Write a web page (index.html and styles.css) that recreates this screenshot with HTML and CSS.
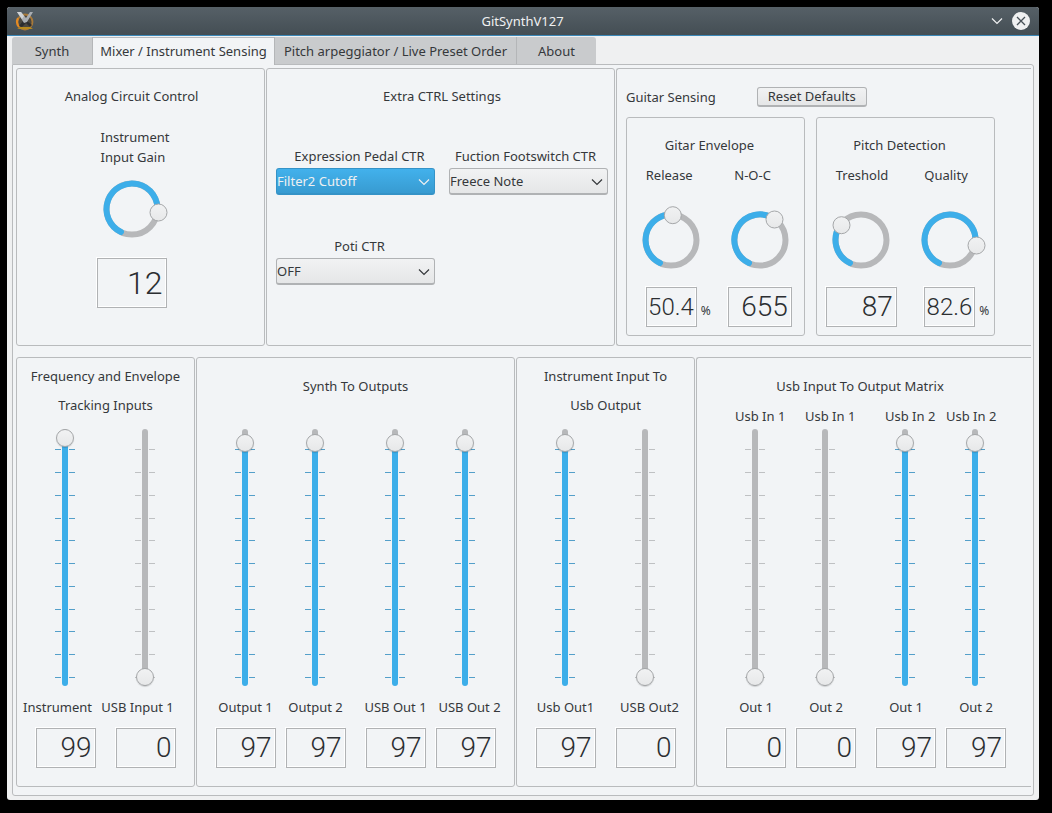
FILE: index.html
```html
<!DOCTYPE html>
<html lang="en">
<head>
<meta charset="utf-8">
<title>GitSynthV127</title>
<link rel="stylesheet" href="styles.css">
</head>
<body>
<svg class="defs" aria-hidden="true">
  <symbol id="ticks" viewBox="0 0 20 257">
    <path stroke="currentColor" fill="none" d="M0 20.5h6m8 0h6M0 43.5h6m8 0h6M0 66.5h6m8 0h6M0 89.5h6m8 0h6M0 111.5h6m8 0h6M0 134.5h6m8 0h6M0 157.5h6m8 0h6M0 180.5h6m8 0h6M0 202.5h6m8 0h6M0 225.5h6m8 0h6M0 248.5h6m8 0h6"/>
  </symbol>
  <symbol id="chevron" viewBox="0 0 12 12"><path d="M1 3.500l5 5 5-5" fill="none" stroke="currentColor" stroke-width="1.200"/></symbol>
  <linearGradient id="knob" x1="0" y1="0" x2="0" y2="1"><stop offset="0" stop-color="#f1f2f3"/><stop offset="1" stop-color="#e7e8e9"/></linearGradient>
</svg>
<div class="window">
  <header class="titlebar">
    <svg class="app-icon" viewBox="0 0 20 20" aria-hidden="true">
      <circle cx="10" cy="11" r="7.500" fill="#4b4740" stroke="#a97a3a" stroke-width="1.800"/>
      <path d="M3 7a8 8 0 0 0 1 9" fill="none" stroke="#e58a22" stroke-width="2"/>
      <path d="M2 18l4-2h9l3 2z" fill="#b98a1c"/>
      <path d="M8 10l-4 5 3 1 4-4 4 4 2-2-5-4z" fill="#2c2d2f"/>
      <path d="M2 1h4l5 6 4-6h3l-6 10-3 1z" fill="#a9adb2"/>
      <path d="M2 1h4l3 4-2 3z" fill="#d0d3d6"/>
    </svg>
    <h1 class="titlebar__name">GitSynthV127</h1>
    <div class="titlebar__buttons">
      <button class="wbtn" aria-label="Minimize"><svg viewBox="0 0 12 12" width="12" height="12"><use href="#chevron"/></svg></button>
      <button class="wbtn wbtn--close" aria-label="Close"><svg viewBox="0 0 18 18" width="18" height="18"><path d="M5 5l8 8M13 5l-8 8" stroke="#475057" stroke-width="1.300"/></svg></button>
    </div>
  </header>

  <main class="body">
    <nav class="tabs" role="tablist">
      <button class="tab tab--synth" role="tab">Synth</button>
      <button class="tab tab--mixer tab--active" role="tab" aria-selected="true">Mixer / Instrument Sensing</button>
      <button class="tab tab--pitch" role="tab">Pitch arpeggiator / Live Preset Order</button>
      <button class="tab tab--about" role="tab">About</button>
    </nav>

    <div class="pane">
      <div class="row row--top">
        <section class="panel panel--analog">
          <h2 class="title">Analog Circuit Control</h2>
          <div class="gain">
            <p class="gain__label">Instrument<br>Input Gain</p>
            <svg class="dial" viewBox="0 0 58 58" role="slider" tabindex="0" aria-label="Instrument Input Gain" aria-valuenow="12">
              <circle class="dial__ring" cx="29" cy="29" r="25.500"/><path class="dial__arc" d="M18 52A25.500 25.500 0 1 1 54.300 32.300"/><circle class="dial__knob" cx="55.500" cy="32.500" r="8.500"/>
            </svg>
            <output class="lcd lcd--gain">12</output>
          </div>
        </section>

        <section class="panel panel--ctrl">
          <h2 class="title">Extra CTRL Settings</h2>
          <div class="fields">
            <div class="field">
              <label for="pedal">Expression Pedal CTR</label>
              <div class="combo combo--focus"><select id="pedal"><option>Filter2 Cutoff</option></select><svg class="combo__arrow"><use href="#chevron"/></svg></div>
            </div>
            <div class="field field--foot">
              <label for="foot">Fuction Footswitch CTR</label>
              <div class="combo"><select id="foot"><option>Freece Note</option></select><svg class="combo__arrow"><use href="#chevron"/></svg></div>
            </div>
            <div class="field">
              <label for="poti">Poti CTR</label>
              <div class="combo"><select id="poti"><option>OFF</option></select><svg class="combo__arrow"><use href="#chevron"/></svg></div>
            </div>
          </div>
        </section>

        <section class="panel panel--open panel--sensing">
          <div class="sensing__head">
            <h2 class="title">Guitar Sensing</h2>
            <button class="push">Reset Defaults</button>
          </div>
          <div class="sensing__groups">
            <section class="panel group">
              <h3 class="title">Gitar Envelope</h3>
              <div class="group__cols">
                <div class="control">
                  <p class="control__label">Release</p>
                  <svg class="dial" viewBox="0 0 58 58" role="slider" tabindex="0" aria-label="Release" aria-valuenow="50.4">
                    <circle class="dial__ring" cx="29" cy="29" r="25.500"/><path class="dial__arc" d="M18 52A25.500 25.500 0 0 1 30.800 3.600"/><circle class="dial__knob" cx="30.800" cy="4.200" r="8.500"/>
                  </svg>
                  <div class="reading"><output class="lcd lcd--pct">50.4</output><span class="unit">%</span></div>
                </div>
                <div class="control">
                  <p class="control__label">N-O-C</p>
                  <svg class="dial" viewBox="0 0 58 58" role="slider" tabindex="0" aria-label="N-O-C" aria-valuenow="655">
                    <circle class="dial__ring" cx="29" cy="29" r="25.500"/><path class="dial__arc" d="M18 52A25.500 25.500 0 1 1 43.700 8.200"/><circle class="dial__knob" cx="43.500" cy="8.500" r="8.500"/>
                  </svg>
                  <div class="reading"><output class="lcd lcd--noc">655</output></div>
                </div>
              </div>
            </section>
            <section class="panel group">
              <h3 class="title">Pitch Detection</h3>
              <div class="group__cols">
                <div class="control">
                  <p class="control__label">Treshold</p>
                  <svg class="dial" viewBox="0 0 58 58" role="slider" tabindex="0" aria-label="Treshold" aria-valuenow="87">
                    <circle class="dial__ring" cx="29" cy="29" r="25.500"/><path class="dial__arc" d="M18 52A25.500 25.500 0 0 1 8.700 13.600"/><circle class="dial__knob" cx="9.500" cy="14.200" r="8.500"/>
                  </svg>
                  <div class="reading"><output class="lcd lcd--treshold">87</output></div>
                </div>
                <div class="control">
                  <p class="control__label">Quality</p>
                  <svg class="dial" viewBox="0 0 58 58" role="slider" tabindex="0" aria-label="Quality" aria-valuenow="82.6">
                    <circle class="dial__ring" cx="29" cy="29" r="25.500"/><path class="dial__arc" d="M18 52A25.500 25.500 0 1 1 54 34.200"/><circle class="dial__knob" cx="55.500" cy="34.500" r="8.500"/>
                  </svg>
                  <div class="reading"><output class="lcd lcd--pct">82.6</output><span class="unit">%</span></div>
                </div>
              </div>
            </section>
          </div>
        </section>
      </div>

      <div class="row row--bottom">
        <section class="panel mixer mixer--tracking">
          <div class="mixer__head mixer__head--two"><h2 class="title">Frequency and Envelope</h2><h2 class="title">Tracking Inputs</h2></div>
          <div class="bank">
            <div class="strip">
              <div class="fader" style="--v:99"><span class="fader__track"></span><svg class="fader__ticks"><use href="#ticks"/></svg><input id="s1" type="range" max="99" value="99"></div>
              <label for="s1">Instrument</label><output class="lcd" for="s1">99</output>
            </div>
            <div class="strip">
              <div class="fader fader--off" style="--v:0"><span class="fader__track"></span><svg class="fader__ticks"><use href="#ticks"/></svg><input id="s2" type="range" max="99" value="0"></div>
              <label for="s2">USB Input 1</label><output class="lcd" for="s2">0</output>
            </div>
          </div>
        </section>

        <section class="panel mixer">
          <div class="mixer__head"><h2 class="title">Synth To Outputs</h2></div>
          <div class="bank">
            <div class="pair">
              <div class="strip">
                <div class="fader" style="--v:97"><span class="fader__track"></span><svg class="fader__ticks"><use href="#ticks"/></svg><input id="s3" type="range" max="99" value="97"></div>
                <label for="s3">Output 1</label><output class="lcd" for="s3">97</output>
              </div>
              <div class="strip">
                <div class="fader" style="--v:97"><span class="fader__track"></span><svg class="fader__ticks"><use href="#ticks"/></svg><input id="s4" type="range" max="99" value="97"></div>
                <label for="s4">Output 2</label><output class="lcd" for="s4">97</output>
              </div>
            </div>
            <div class="pair">
              <div class="strip">
                <div class="fader" style="--v:97"><span class="fader__track"></span><svg class="fader__ticks"><use href="#ticks"/></svg><input id="s5" type="range" max="99" value="97"></div>
                <label for="s5">USB Out 1</label><output class="lcd" for="s5">97</output>
              </div>
              <div class="strip">
                <div class="fader" style="--v:97"><span class="fader__track"></span><svg class="fader__ticks"><use href="#ticks"/></svg><input id="s6" type="range" max="99" value="97"></div>
                <label class="wide" for="s6">USB Out 2</label><output class="lcd" for="s6">97</output>
              </div>
            </div>
          </div>
        </section>

        <section class="panel mixer">
          <div class="mixer__head mixer__head--two"><h2 class="title">Instrument Input To</h2><h2 class="title">Usb Output</h2></div>
          <div class="bank">
            <div class="strip">
              <div class="fader" style="--v:97"><span class="fader__track"></span><svg class="fader__ticks"><use href="#ticks"/></svg><input id="s7" type="range" max="99" value="97"></div>
              <label for="s7">Usb Out1</label><output class="lcd" for="s7">97</output>
            </div>
            <div class="strip">
              <div class="fader fader--off" style="--v:0"><span class="fader__track"></span><svg class="fader__ticks"><use href="#ticks"/></svg><input id="s8" type="range" max="99" value="0"></div>
              <label class="wide" for="s8">USB Out2</label><output class="lcd" for="s8">0</output>
            </div>
          </div>
        </section>

        <section class="panel panel--open mixer mixer--matrix">
          <div class="mixer__head"><h2 class="title">Usb Input To Output Matrix</h2></div>
          <div class="bank">
            <div class="pair">
              <div class="strip">
                <span class="source">Usb In 1</span>
                <div class="fader fader--off" style="--v:0"><span class="fader__track"></span><svg class="fader__ticks"><use href="#ticks"/></svg><input id="s9" type="range" max="99" value="0"></div>
                <label for="s9">Out 1</label><output class="lcd" for="s9">0</output>
              </div>
              <div class="strip">
                <span class="source">Usb In 1</span>
                <div class="fader fader--off" style="--v:0"><span class="fader__track"></span><svg class="fader__ticks"><use href="#ticks"/></svg><input id="s10" type="range" max="99" value="0"></div>
                <label for="s10">Out 2</label><output class="lcd" for="s10">0</output>
              </div>
            </div>
            <div class="pair">
              <div class="strip">
                <span class="source">Usb In 2</span>
                <div class="fader" style="--v:97"><span class="fader__track"></span><svg class="fader__ticks"><use href="#ticks"/></svg><input id="s11" type="range" max="99" value="97"></div>
                <label for="s11">Out 1</label><output class="lcd" for="s11">97</output>
              </div>
              <div class="strip">
                <span class="source source--flush">Usb In 2</span>
                <div class="fader" style="--v:97"><span class="fader__track"></span><svg class="fader__ticks"><use href="#ticks"/></svg><input id="s12" type="range" max="99" value="97"></div>
                <label for="s12">Out 2</label><output class="lcd" for="s12">97</output>
              </div>
            </div>
          </div>
        </section>
      </div>
    </div>
  </main>
</div>
</body>
</html>
```

FILE: styles.css
```css
:root {
  --text: #35383b;
  --line: #b9bbbd;
  --blue: #3daee9;
  --groove: #b7b8ba;
  --surface: #f2f4f6;
}

* { box-sizing: border-box; }

body {
  margin: 0;
  min-height: 100vh;
  padding: 7px 13px 13px 7px;
  display: flex;
  background: #000;
  color: var(--text);
  font: 13px/20px "Noto Sans", sans-serif;
}

h1, h2, h3, p { margin: 0; font-size: 13px; font-weight: 400; }
button, select { font: inherit; color: inherit; }
.defs { position: absolute; width: 0; height: 0; }

.window {
  flex: 1;
  display: flex;
  flex-direction: column;
  background: #eff0f1;
  border-radius: 3px;
  overflow: hidden;
}

/* Title bar */
.titlebar {
  display: grid;
  grid-template-columns: 1fr auto 1fr;
  align-items: center;
  height: 29px;
  padding: 0 9px 0 8px;
  background: linear-gradient(#566067, #444e54);
  border-bottom: 1px solid #3b88b8;
  color: #eff0f1;
}
.app-icon { width: 20px; height: 20px; }
.titlebar__buttons { display: flex; justify-content: flex-end; align-items: center; gap: 9px; }
.wbtn { display: grid; place-items: center; padding: 0; border: 0; background: none; color: #eff0f1; }
.wbtn--close { border-radius: 50%; background: #eff0f1; }

/* Tabs */
.body { flex: 1; display: flex; flex-direction: column; padding: 1px 5px 4px; }
.tabs { display: flex; height: 27px; }
.tab {
  height: 27px;
  padding: 0;
  border: 0;
  border-right: 1px solid #b4b6b8;
  background: #c9cbcd;
  white-space: nowrap;
}
.tab--synth { width: 81px; border-radius: 3px 0 0 0; }
.tab--mixer { width: 182px; }
.tab--pitch { width: 242px; }
.tab--about { width: 79px; border-right: 0; border-radius: 0 3px 0 0; }
.tab--active {
  height: 28px;
  padding-bottom: 1px;
  border-top: 1px solid var(--line);
  background: var(--surface);
  z-index: 1;
}

.pane {
  flex: 1;
  padding: 3px 2px 8px 3px;
  display: flex;
  flex-direction: column;
  gap: 11px;
  border: 1px solid var(--line);
  border-radius: 0 3px 3px 3px;
  background: var(--surface);
}

.row { display: grid; gap: 1px; }
.row--top { grid-template-columns: 249fr 349fr 415fr; }
.row--bottom { flex: 1; grid-template-columns: 179fr 319fr 179fr 335fr; }

.panel {
  min-width: 0;
  border: 1px solid var(--line);
  border-radius: 3px;
  display: flex;
  flex-direction: column;
}
.panel--open { border-right: 0; border-radius: 3px 0 0 3px; }
.title { white-space: nowrap; text-align: center; }

/* Analog circuit */
.panel--analog { padding: 17px 18px 0 0; align-items: center; gap: 21px; }
.gain { display: flex; flex-direction: column; align-items: flex-start; width: 70px; }
.gain__label { padding-left: 4px; white-space: nowrap; }
.gain .dial { margin: 13px 0 20px 6px; }

.dial { width: 58px; height: 58px; overflow: visible; flex: none; }
.dial__ring { fill: none; stroke: var(--groove); stroke-width: 6; }
.dial__arc { fill: none; stroke: var(--blue); stroke-width: 6; stroke-linecap: round; }
.dial__knob { fill: url(#knob); stroke: #a5a7a9; stroke-width: 1; }

/* Numeric displays */
.lcd {
  display: block;
  width: 60px;
  height: 40px;
  padding-right: 3px;
  border: 1px solid #b0b2b4;
  box-shadow: -1px -1px 0 #fff, inset -1px -1px 0 #fff;
  color: #2b2e31;
  font: 300 28px/38px Roboto, "Liberation Sans", sans-serif;
  text-align: right;
}
.lcd--gain { width: 70px; height: 50px; font-size: 32px; line-height: 48px; }
.lcd--pct { width: 51px; padding-right: 2px; font-size: 24px; }
.lcd--noc { width: 64px; }
.lcd--treshold { width: 71px; }

/* Extra controls */
.panel--ctrl { padding: 17px 6px 0 9px; gap: 40px; }
.fields { display: grid; grid-template-columns: 1fr 1fr; gap: 41px 14px; }
.field { display: flex; flex-direction: column; gap: 2px; text-align: center; }
.field label { padding-left: 8px; white-space: nowrap; }
.field--foot label { padding: 0 6px 0 0; }
.combo { display: grid; color: var(--text); }
.combo select {
  grid-area: 1 / 1;
  appearance: none;
  height: 27px;
  padding: 0;
  border: 1px solid #b0b2b4;
  border-bottom-width: 2px;
  border-radius: 3px;
  background: linear-gradient(#f1f2f3, #e5e6e7);
}
.combo__arrow { grid-area: 1 / 1; place-self: center end; width: 12px; height: 12px; margin-right: 5px; pointer-events: none; }
.combo--focus { color: #eff0f1; }
.combo--focus select { border-color: #3593c7; background: linear-gradient(#42b1ec, #389bd1); }

/* Guitar sensing */
.panel--sensing { padding: 18px 36px 9px 9px; gap: 10px; }
.sensing__head { display: flex; align-items: center; gap: 41px; }
.push {
  width: 110px;
  height: 20px;
  padding: 0;
  border: 1px solid #b0b2b4;
  border-bottom-width: 2px;
  border-radius: 3px;
  background: linear-gradient(#f1f2f3, #e5e6e7);
  line-height: 17px;
}
.sensing__groups { display: grid; grid-template-columns: 1fr 1fr; gap: 11px; }
.group { padding: 17px 0 8px; gap: 10px; }
.group .title { padding-right: 12px; }
.group__cols { display: grid; grid-template-columns: 1fr 1fr; }
.control { display: flex; flex-direction: column; align-items: center; min-width: 0; }
.control__label { width: 51px; white-space: nowrap; }
.control .dial { margin: 26px 0 18px; }
.reading { align-self: stretch; display: grid; grid-template-columns: 1fr auto 1fr; }
.reading .lcd { grid-column: 2; }
.unit { padding: 14px 0 0 4px; font-size: 12px; }

/* Mixer banks */
.mixer { justify-content: space-between; padding-bottom: 18px; }
.mixer__head { height: 0; padding-top: 18px; }
.mixer__head--two { display: grid; gap: 9px; padding-top: 8px; }
.mixer--matrix .mixer__head { padding-right: 8px; }
.mixer--matrix .bank { padding-left: 4px; }
.bank { display: flex; justify-content: center; gap: 20px; }
.pair { display: flex; gap: 10px; }
.strip { display: flex; flex-direction: column; align-items: center; width: 60px; }
.strip label { margin: 11px 0; white-space: nowrap; }
.strip .wide { padding-left: 8px; }
.mixer--tracking label { padding-right: 16px; }
.source { align-self: flex-start; padding-left: 9px; margin-bottom: 3px; white-space: nowrap; }
.source--flush { padding-left: 0; }

.fader { display: grid; justify-items: center; width: 20px; height: 257px; margin-right: 2px; color: #549fc9; }
.fader > * { grid-area: 1 / 1; }
.fader--off { color: #bfc1c3; }
.fader__track {
  --knob: calc(9px + (99 - var(--v)) / 99 * (100% - 18px));
  width: 6px;
  height: 100%;
  border-radius: 3px;
  background: linear-gradient(var(--groove) var(--knob), var(--blue) var(--knob));
}
.fader--off .fader__track { background: var(--groove); }
.fader__ticks { width: 20px; height: 257px; }
.fader input {
  appearance: none;
  writing-mode: vertical-lr;
  direction: rtl;
  width: 18px;
  height: 257px;
  margin: 0;
  background: none;
}
.fader input::-webkit-slider-thumb {
  appearance: none;
  width: 18px;
  height: 18px;
  border: 1px solid #a5a7a9;
  border-radius: 50%;
  background: linear-gradient(#f1f2f3, #e7e8e9);
  box-shadow: 0 1px 1px rgba(0, 0, 0, 0.15);
}
```
